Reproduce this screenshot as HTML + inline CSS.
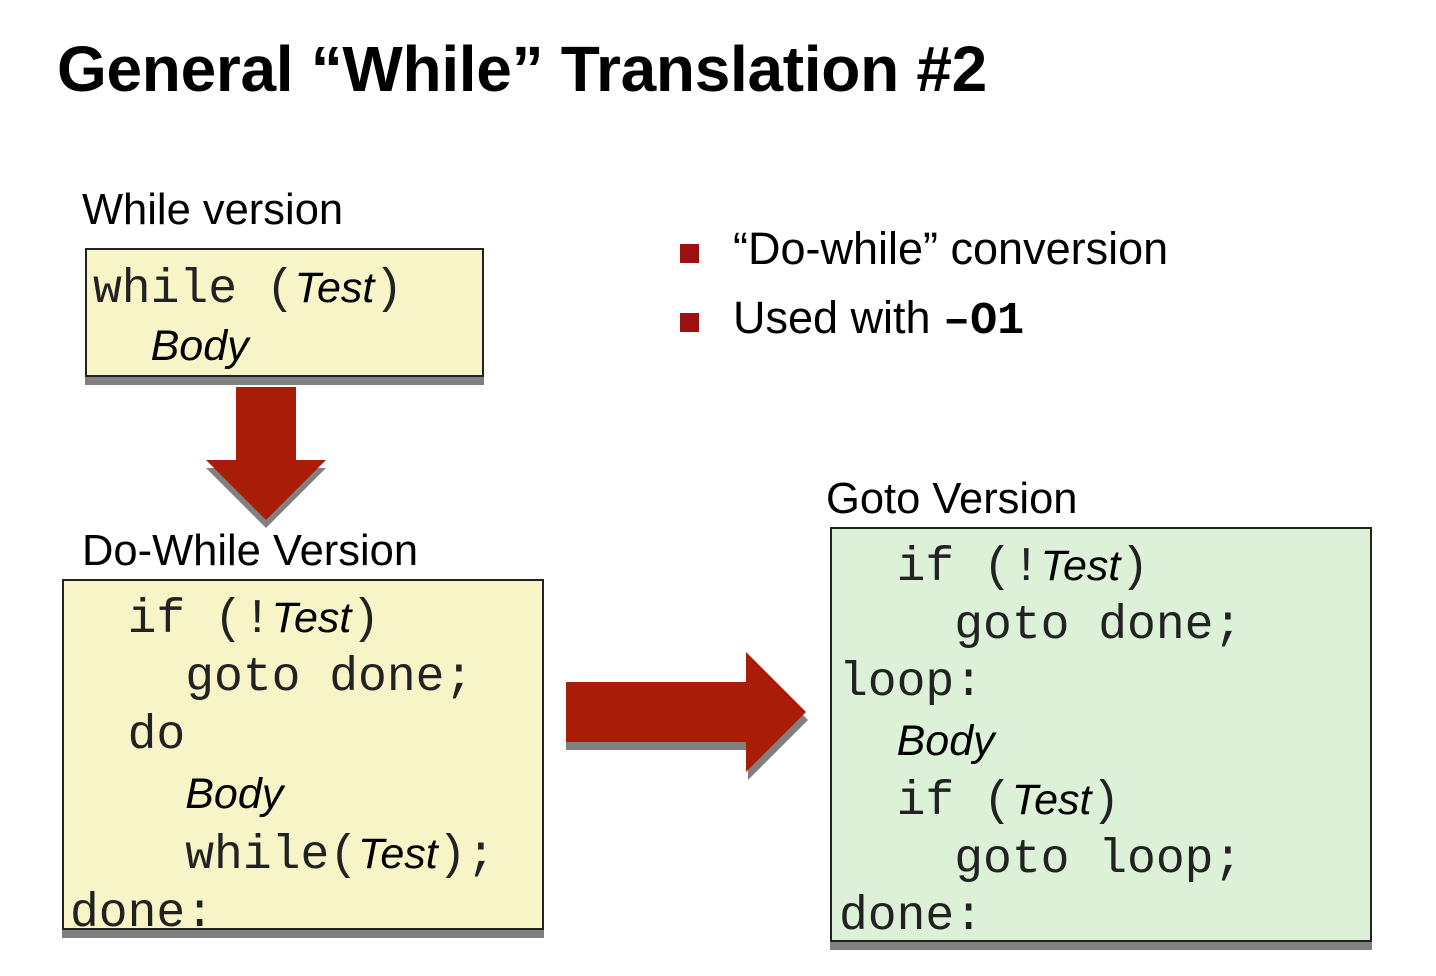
<!DOCTYPE html>
<html><head><meta charset="utf-8"><style>
body{margin:0;width:1436px;height:976px;background:#fff;position:relative;overflow:hidden;font-family:"Liberation Sans",sans-serif;color:#000}
.a{position:absolute;white-space:pre}
.t{left:57px;top:32px;font-size:64px;font-weight:bold;letter-spacing:-0.3px}
.lab{font-size:43.5px}
.box{position:absolute;border:2px solid #222;box-shadow:0 8px 0 #808080}
.y{background:#f7f5c8}
.g{background:#dcf1d8}
.code{position:absolute;font-family:"Liberation Mono",monospace;font-size:48px;white-space:pre;color:#222}
.code i{font-family:"Liberation Sans",sans-serif;font-size:43px;font-style:italic;color:#000}
.bul{position:absolute;width:19px;height:19px;background:#9b1010}
.bt{font-size:45px}
</style></head><body>
<div class="a t">General “While” Translation #2</div>

<div class="a lab" style="left:82px;top:186px">While version</div>
<div class="box y" style="left:85px;top:248px;width:395px;height:125px"></div>
<div class="code" style="left:93px;top:260px;line-height:56px">while (<i>Test</i>)
  <i>Body</i></div>

<svg class="a" style="left:0;top:0" width="1436" height="976">
<polygon points="236,395 296,395 296,468 326,468 266,528 206,468 236,468" fill="#808080"/>
<polygon points="236,387 296,387 296,460 326,460 266,520 206,460 236,460" fill="#a81c08"/>
<polygon points="566,690 748,690 748,660 808,720 748,780 748,750 566,750" fill="#808080"/>
<polygon points="566,682 746,682 746,652 806,712 746,772 746,742 566,742" fill="#a81c08"/>
</svg>

<div class="bul" style="left:680px;top:244px"></div>
<div class="a bt" style="left:733px;top:223px">“Do-while” conversion</div>
<div class="bul" style="left:680px;top:313px"></div>
<div class="a bt" style="left:733px;top:292px">Used with <b style="font-family:'Liberation Mono',monospace">–O1</b></div>

<div class="a lab" style="left:82px;top:527px">Do-While Version</div>
<div class="box y" style="left:62px;top:579px;width:478px;height:347px"></div>
<div class="code" style="left:70px;top:589px;line-height:58px">  if (!<i>Test</i>)
    goto done;
  do
    <i>Body</i>
    while(<i>Test</i>);
done:</div>

<div class="a lab" style="left:826px;top:475px">Goto Version</div>
<div class="box g" style="left:830px;top:527px;width:538px;height:411px"></div>
<div class="code" style="left:839px;top:538px;line-height:57.5px">  if (!<i>Test</i>)
    goto done;
loop:
  <i>Body</i>
  if (<i>Test</i>)
    goto loop;
done:</div>
</body></html>
